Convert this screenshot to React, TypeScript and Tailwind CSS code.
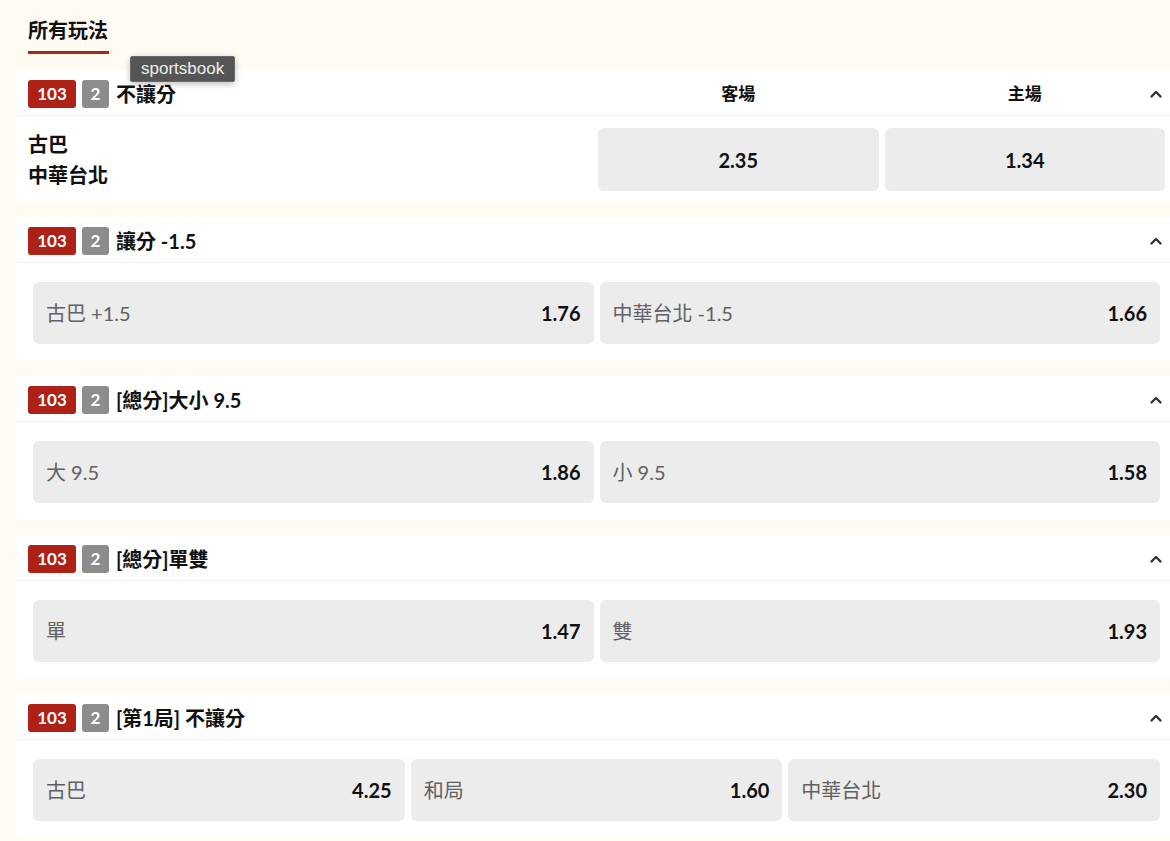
// App.tsx

type Pick = { label: string; odds: string };

type Market = {
  title: string;
  picks: Pick[];
};

const markets: Market[] = [
  {
    title: "讓分 -1.5",
    picks: [
      { label: "古巴 +1.5", odds: "1.76" },
      { label: "中華台北 -1.5", odds: "1.66" },
    ],
  },
  {
    title: "[總分]大小 9.5",
    picks: [
      { label: "大 9.5", odds: "1.86" },
      { label: "小 9.5", odds: "1.58" },
    ],
  },
  {
    title: "[總分]單雙",
    picks: [
      { label: "單", odds: "1.47" },
      { label: "雙", odds: "1.93" },
    ],
  },
  {
    title: "[第1局] 不讓分",
    picks: [
      { label: "古巴", odds: "4.25" },
      { label: "和局", odds: "1.60" },
      { label: "中華台北", odds: "2.30" },
    ],
  },
];

const font = "font-['Lato','Noto_Sans_CJK_TC',sans-serif]";

const Chevron = () => (
  <svg width="14" height="10" viewBox="0 0 14 10" className="relative text-[#333]">
    <polyline
      points="2.5,7.5 7,3 11.5,7.5"
      fill="none"
      stroke="currentColor"
      strokeWidth="2.4"
      strokeLinecap="round"
      strokeLinejoin="round"
    />
  </svg>
);

// 見出しの共通部分
const Header = ({ title, children }: { title: string; children?: React.ReactNode }) => (
  <div className="flex items-center h-[46px] pt-[2px] pl-3 pr-[14px] border-b border-[#f0f0f7]">
    <span className="h-[28px] w-[48px] flex items-center justify-center rounded-[3px] bg-[#ad2117] text-white text-[17px] font-bold">
      103
    </span>
    <span className="h-[28px] w-[27px] ml-[6px] flex items-center justify-center rounded-[3px] bg-[#8c8c8c] text-white text-[17px] font-bold">
      2
    </span>
    <span className="ml-[7px] text-[20px] font-bold text-[#111]">{title}</span>
    <div className="flex-grow flex items-center">{children}</div>
    <Chevron />
  </div>
);

const OddsButton = ({ label, odds }: Pick) => (
  <div className="flex-1 h-[62px] rounded-[6px] bg-[#ececec] flex items-center justify-between pl-[13px] pr-[13px]">
    <span className="text-[20px] text-[#616161]">{label}</span>
    <span className="text-[20px] font-bold text-[#111]">{odds}</span>
  </div>
);

export default function App() {
  return (
    <div className={`${font} min-h-[841px] w-full overflow-hidden bg-[#fffbf3]`}>
      {/* タブ */}
      <div className="relative h-[70px] pl-7">
        <div className="inline-flex flex-col pt-[17px]">
          <span className="text-[20px] font-semibold leading-[26px] text-[#111]">所有玩法</span>
          <span className="mt-[8px] h-[3px] w-[81px] bg-[#b02418]" />
        </div>
        {/* ツールチップ */}
        <div className="absolute left-[130px] top-[56px] z-10 h-[26px] px-[10px] flex items-center rounded-[2px] bg-[#555] border border-[#6a6a6a] text-[17px] text-[#eee] shadow-[0_2px_6px_rgba(0,0,0,0.25)] font-['Liberation_Sans',sans-serif]">
          sportsbook
        </div>
      </div>

      <div className="ml-4 w-[1161px] flex flex-col gap-[15px]">
        {/* 不讓分 */}
        <div className="bg-white rounded-[4px]">
          <Header title="不讓分">
            <div className="ml-auto w-[567px] flex gap-[6px] mr-[-16px]">
              <span className="flex-1 text-center text-[17px] font-bold text-[#111]">客場</span>
              <span className="flex-1 text-center text-[17px] font-bold text-[#111]">主場</span>
            </div>
          </Header>
          <div className="flex items-center pl-3 pr-3 pt-3 pb-[11px]">
            <div className="flex-grow flex flex-col text-[20px] font-bold text-[#111] leading-[31px]">
              <span>古巴</span>
              <span>中華台北</span>
            </div>
            <div className="w-[567px] flex gap-[6px]">
              <div className="flex-1 h-[63px] rounded-[6px] bg-[#ececec] flex items-center justify-center text-[20px] font-bold text-[#111]">
                2.35
              </div>
              <div className="flex-1 h-[63px] rounded-[6px] bg-[#ececec] flex items-center justify-center text-[20px] font-bold text-[#111]">
                1.34
              </div>
            </div>
          </div>
        </div>

        {markets.map((m) => (
          <div key={m.title} className="bg-white rounded-[4px]">
            <Header title={m.title} />
            <div className="flex gap-[6px] px-[17px] pt-[19px] pb-[17px]">
              {m.picks.map((p) => (
                <OddsButton key={p.label} label={p.label} odds={p.odds} />
              ))}
            </div>
          </div>
        ))}
      </div>
    </div>
  );
}
